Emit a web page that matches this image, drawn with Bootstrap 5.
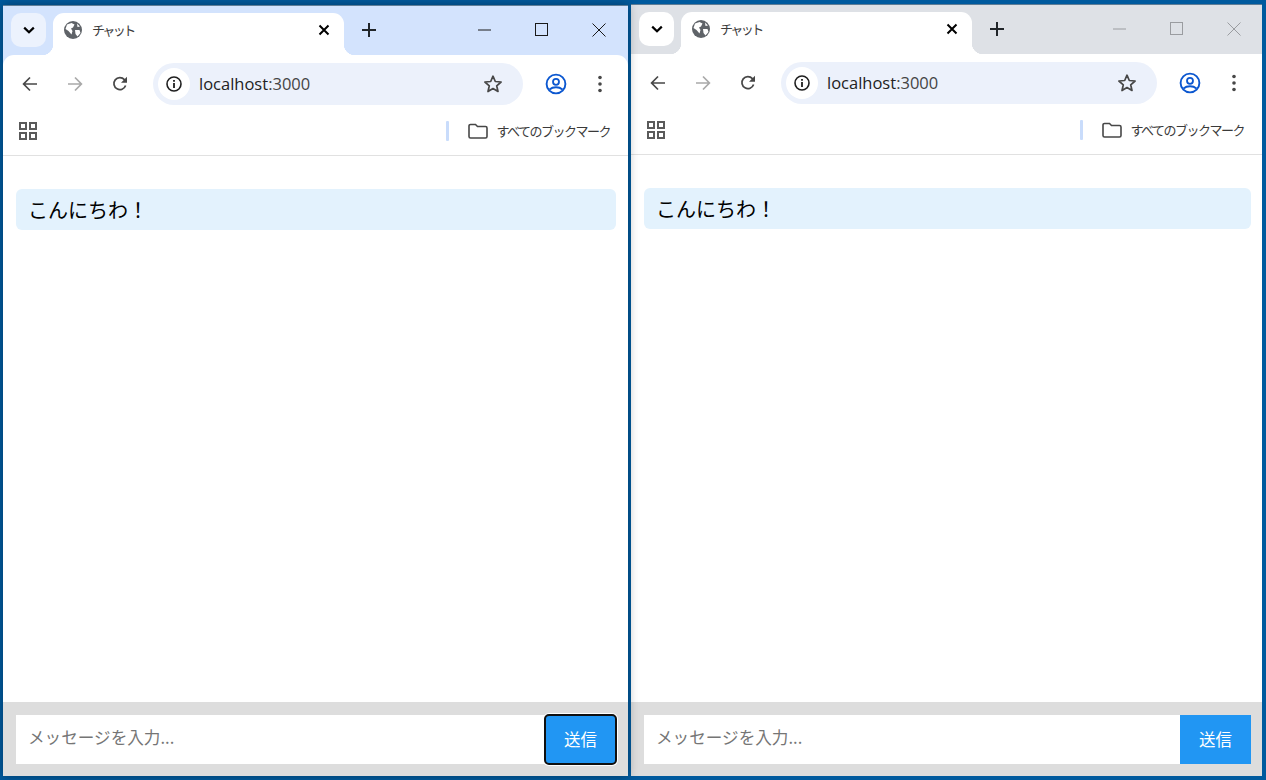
<!DOCTYPE html>
<html lang="ja">
<head>
    <meta charset="UTF-8">
    <title>チャット</title>
    <link href="https://cdn.jsdelivr.net/npm/bootstrap@5.3.3/dist/css/bootstrap.min.css" rel="stylesheet">
    <style>
        html, body { height: 100%; }
        body { background: #005a9e; overflow: hidden; font-family: "Noto Sans CJK JP", sans-serif; color: #000; }
        .desk { height: 780px; padding: 4px 4px 4px 3px; gap: 3px; }
        .win { background: #fff; border-top: 1px solid #5f7d96; }
        .win-a { width: 625px; margin-top: 1px; position: relative; z-index: 2; box-shadow: 0 0 10px rgba(0, 0, 0, .35); --frame: #d3e3fd; --chev: #ecf2fd; }
        .win-b { width: 631px; --frame: #dee1e6; --chev: #fff; }
        .titlebar { height: 49px; background: var(--frame); padding: 7px 0 0 8px; flex: none; }
        .chev { width: 35px; height: 34px; border-radius: 10px; background: var(--chev); }
        .tabitem { width: 291px; height: 42px; margin-left: 7px; padding: 0 14px 8px 11px; background: #fff; border-radius: 11px 11px 0 0; position: relative; }
        .tabitem::before, .tabitem::after { content: ""; position: absolute; bottom: 0; width: 11px; height: 11px; }
        .tabitem::before { left: -11px; background: radial-gradient(circle at 0 0, transparent 11px, #fff 11.5px); }
        .tabitem::after { right: -11px; background: radial-gradient(circle at 100% 0, transparent 11px, #fff 11.5px); }
        .tabname { font-size: 13px; margin-left: 10px; color: #3c3c3c; letter-spacing: -2.5px; }
        .newtab { margin: 10px 0 0 18px; }
        .winctl { width: 57px; padding-top: 10px; }
        .win-a .ctls { margin-right: 1px; }
        .win-a .winctl svg { color: #1a1a1a; }
        .win-a .ctl-min svg { margin-left: 2px; margin-right: 2px; }
        .win-b .winctl svg { color: #9a9ca0; }
        .toolbar { height: 56px; padding: 1px 0 0 19px; background: #fff; border-radius: 11px 11px 0 0; flex: none; position: relative; }
        .toolbar::before { content: ""; position: absolute; inset: 0 0 auto 0; height: 11px; z-index: -1; background: var(--frame); }
        .navbtn { width: 30px; }
        .navgap { margin-right: 15px; }
        .navdark { color: #474747; }
        .navdim { color: #a9a9a9; }
        .omni { width: 370px; height: 42px; margin-left: 11px; border-radius: 21px; background: #ecf1fb; padding: 0 20px 0 5px; }
        .win-b .omni { width: 376px; }
        .infobub { width: 32px; height: 32px; border-radius: 50%; background: #fff; }
        .urltext { font-family: "Open Sans", sans-serif; font-size: 16.5px; margin-left: 9px; padding-top: 2px; color: #222; }
        .urlport { color: #444; }
        .acct { margin-left: 20px; width: 26px; }
        .dots { margin-left: 18px; width: 26px; }
        .bookbar { height: 45px; padding: 0 18px 5px 16px; border-bottom: 1px solid #e1e1e1; flex: none; }
        .booksep { width: 3px; height: 20px; background: #c9dcfb; border-radius: 1px; margin-right: 19px; }
        .booktext { font-size: 13px; margin-left: 8px; color: #3a3a3a; letter-spacing: -1.5px; white-space: nowrap; }
        .chat { padding: 33px 12px 0 13px; }
        .win-b .chat { padding-right: 11px; }
        .msg { height: 41px; padding-left: 12px; background: #e3f2fd; border-radius: 6px; font-size: 20px; line-height: 41px; }
        .inputbar { height: 74px; background: #ddd; padding: 13px 12px 11px 13px; flex: none; }
        .win-b .inputbar { padding-right: 11px; }
        .inputbar input { flex: 1; min-width: 0; height: 49px; border: 0; background: #fff; padding: 0 13px 5px 12px; font-size: 16.6px; border-radius: 0; outline: 0; font-family: inherit; }
        .inputbar input::placeholder { color: #757575; }
        .sendbtn { width: 71px; height: 49px; border: 0; background: #2196f3; color: #fff; font-size: 16.5px; border-radius: 0; padding: 0; }
        .sendbtn-focus { width: 71px; outline: 2px solid #101010; outline-offset: -1px; border-radius: 4px; box-shadow: 0 0 0 2px #fff; }
    </style>
</head>
<body>
<svg width="0" height="0" class="position-absolute">
    <symbol id="i-chev" viewBox="0 0 14 14"><path d="M2.2 4.6 7 9.2l4.8-4.6" fill="none" stroke="currentColor" stroke-width="2.2"/></symbol>
    <symbol id="i-globe" viewBox="0 0 18 18"><circle cx="9" cy="9" r="9" fill="#5f6368"/><path d="M3 3.5 7.500 2l3 1.500L9 6.500l-2 1 1.500 2.500-1 3.500L4.500 10 1.500 8zM11 9h4.500l1 3-3 3.500-2-2.500zM13 2.500l3 3-2.500.5z" fill="#fff"/></symbol>
    <symbol id="i-x" viewBox="0 0 12 12"><path d="M1.500 1.500l9 9m0-9-9 9" stroke="currentColor" stroke-width="2"/></symbol>
    <symbol id="i-plus" viewBox="0 0 14 14"><path d="M7 0v14M0 7h14" stroke="currentColor" stroke-width="2"/></symbol>
    <symbol id="i-min" viewBox="0 0 14 14"><path d="M0 7h13" stroke="currentColor"/></symbol>
    <symbol id="i-max" viewBox="0 0 14 14"><rect x=".5" y=".5" width="12" height="12" fill="none" stroke="currentColor"/></symbol>
    <symbol id="i-close" viewBox="0 0 14 14"><path d="M.5.5l13 13m0-13-13 13" stroke="currentColor" fill="none"/></symbol>
    <symbol id="i-left" viewBox="0 0 16 16"><path d="M15 8H2M8 1.500 1.600 8 8 14.500" fill="none" stroke="currentColor" stroke-width="1.700"/></symbol>
    <symbol id="i-right" viewBox="0 0 16 16"><path d="M1 8h13M8 1.500 14.400 8 8 14.500" fill="none" stroke="currentColor" stroke-width="1.700"/></symbol>
    <symbol id="i-reload" viewBox="0 0 16 16"><path d="M13.600 9.500A6 6 0 1 1 12.400 3.600L14 5.400" fill="none" stroke="currentColor" stroke-width="1.700"/><path d="M15 .8v6H9z" fill="currentColor"/></symbol>
    <symbol id="i-info" viewBox="0 0 16 16"><circle cx="8" cy="8" r="7" fill="none" stroke="#1f1f1f" stroke-width="1.600"/><path d="M7.100 7h1.800v5H7.100zM7.100 4h1.800v1.800H7.100z" fill="#1f1f1f"/></symbol>
    <symbol id="i-star" viewBox="0 0 20 20"><path d="M10 2.200l2.300 5.300 5.800.5-4.400 3.800 1.300 5.700L10 14.500l-5 3 1.300-5.700L1.900 8l5.800-.5z" fill="none" stroke="#474747" stroke-width="1.700" stroke-linejoin="round"/></symbol>
    <symbol id="i-acct" viewBox="0 0 22 22"><circle cx="11" cy="11" r="9.400" fill="none" stroke="#0b57d0" stroke-width="1.900"/><circle cx="11" cy="8.800" r="3" fill="none" stroke="#0b57d0" stroke-width="1.800"/><path d="M4.500 16.500c3.500-3 9.500-3 13 0" fill="none" stroke="#0b57d0" stroke-width="1.800"/></symbol>
    <symbol id="i-dots" viewBox="0 0 4 18"><circle cx="2" cy="2.500" r="1.800" fill="#474747"/><circle cx="2" cy="9" r="1.800" fill="#474747"/><circle cx="2" cy="15.500" r="1.800" fill="#474747"/></symbol>
    <symbol id="i-apps" viewBox="0 0 18 18"><path d="M1 1h6v6H1zM11 1h6v6h-6zM1 11h6v6H1zM11 11h6v6h-6z" fill="none" stroke="#5a5a5a" stroke-width="2"/></symbol>
    <symbol id="i-folder" viewBox="0 0 20 16"><path d="M1 3a1.500 1.500 0 0 1 1.500-1.500h5L9.500 3.500h8A1.500 1.500 0 0 1 19 5v8.500a1.500 1.500 0 0 1-1.500 1.500h-15A1.500 1.500 0 0 1 1 13.500z" fill="none" stroke="#474747" stroke-width="1.600"/></symbol>
</svg>

<div class="desk d-flex">
    <div class="win win-a d-flex flex-column">
        <div class="titlebar d-flex align-items-start">
            <div class="chev d-flex align-items-center justify-content-center"><svg width="14" height="14"><use href="#i-chev"/></svg></div>
            <div class="tabitem d-flex align-items-center">
                <svg width="18" height="18"><use href="#i-globe"/></svg>
                <span class="tabname flex-grow-1">チャット</span>
                <svg width="12" height="12"><use href="#i-x"/></svg>
            </div>
            <svg class="newtab text-dark" width="14" height="14"><use href="#i-plus"/></svg>
            <div class="ctls ms-auto d-flex">
                <div class="winctl ctl-min d-flex justify-content-center"><svg width="14" height="14"><use href="#i-min"/></svg></div>
                <div class="winctl d-flex justify-content-center"><svg width="14" height="14"><use href="#i-max"/></svg></div>
                <div class="winctl d-flex justify-content-center"><svg width="14" height="14"><use href="#i-close"/></svg></div>
            </div>
        </div>
        <div class="toolbar d-flex align-items-center">
            <div class="navbtn navgap navdark"><svg width="16" height="16" class="d-block"><use href="#i-left"/></svg></div>
            <div class="navbtn navgap navdim"><svg width="16" height="16" class="d-block"><use href="#i-right"/></svg></div>
            <div class="navbtn navdark"><svg width="16" height="16" class="d-block"><use href="#i-reload"/></svg></div>
            <div class="omni d-flex align-items-center">
                <div class="infobub d-flex align-items-center justify-content-center"><svg width="16" height="16"><use href="#i-info"/></svg></div>
                <span class="urltext flex-grow-1">localhost<span class="urlport">:3000</span></span>
                <svg width="20" height="20"><use href="#i-star"/></svg>
            </div>
            <svg class="acct" width="22" height="22"><use href="#i-acct"/></svg>
            <svg class="dots" width="4" height="18"><use href="#i-dots"/></svg>
        </div>
        <div class="bookbar d-flex align-items-center">
            <svg width="18" height="18"><use href="#i-apps"/></svg>
            <div class="booksep ms-auto"></div>
            <svg width="20" height="16"><use href="#i-folder"/></svg>
            <span class="booktext">すべてのブックマーク</span>
        </div>
        <div class="chat flex-grow-1"><div class="msg">こんにちわ！</div></div>
        <div class="inputbar d-flex">
            <input type="text" placeholder="メッセージを入力...">
            <button class="sendbtn sendbtn-focus">送信</button>
        </div>
    </div>

    <div class="win win-b d-flex flex-column">
        <div class="titlebar d-flex align-items-start">
            <div class="chev d-flex align-items-center justify-content-center"><svg width="14" height="14"><use href="#i-chev"/></svg></div>
            <div class="tabitem d-flex align-items-center">
                <svg width="18" height="18"><use href="#i-globe"/></svg>
                <span class="tabname flex-grow-1">チャット</span>
                <svg width="12" height="12"><use href="#i-x"/></svg>
            </div>
            <svg class="newtab text-dark" width="14" height="14"><use href="#i-plus"/></svg>
            <div class="ctls ms-auto d-flex">
                <div class="winctl d-flex justify-content-center"><svg width="14" height="14"><use href="#i-min"/></svg></div>
                <div class="winctl d-flex justify-content-center"><svg width="14" height="14"><use href="#i-max"/></svg></div>
                <div class="winctl d-flex justify-content-center"><svg width="14" height="14"><use href="#i-close"/></svg></div>
            </div>
        </div>
        <div class="toolbar d-flex align-items-center">
            <div class="navbtn navgap navdark"><svg width="16" height="16" class="d-block"><use href="#i-left"/></svg></div>
            <div class="navbtn navgap navdim"><svg width="16" height="16" class="d-block"><use href="#i-right"/></svg></div>
            <div class="navbtn navdark"><svg width="16" height="16" class="d-block"><use href="#i-reload"/></svg></div>
            <div class="omni d-flex align-items-center">
                <div class="infobub d-flex align-items-center justify-content-center"><svg width="16" height="16"><use href="#i-info"/></svg></div>
                <span class="urltext flex-grow-1">localhost<span class="urlport">:3000</span></span>
                <svg width="20" height="20"><use href="#i-star"/></svg>
            </div>
            <svg class="acct" width="22" height="22"><use href="#i-acct"/></svg>
            <svg class="dots" width="4" height="18"><use href="#i-dots"/></svg>
        </div>
        <div class="bookbar d-flex align-items-center">
            <svg width="18" height="18"><use href="#i-apps"/></svg>
            <div class="booksep ms-auto"></div>
            <svg width="20" height="16"><use href="#i-folder"/></svg>
            <span class="booktext">すべてのブックマーク</span>
        </div>
        <div class="chat flex-grow-1"><div class="msg">こんにちわ！</div></div>
        <div class="inputbar d-flex">
            <input type="text" placeholder="メッセージを入力...">
            <button class="sendbtn">送信</button>
        </div>
    </div>
</div>
<script src="https://cdn.jsdelivr.net/npm/bootstrap@5.3.3/dist/js/bootstrap.bundle.min.js"></script>
</body>
</html>
